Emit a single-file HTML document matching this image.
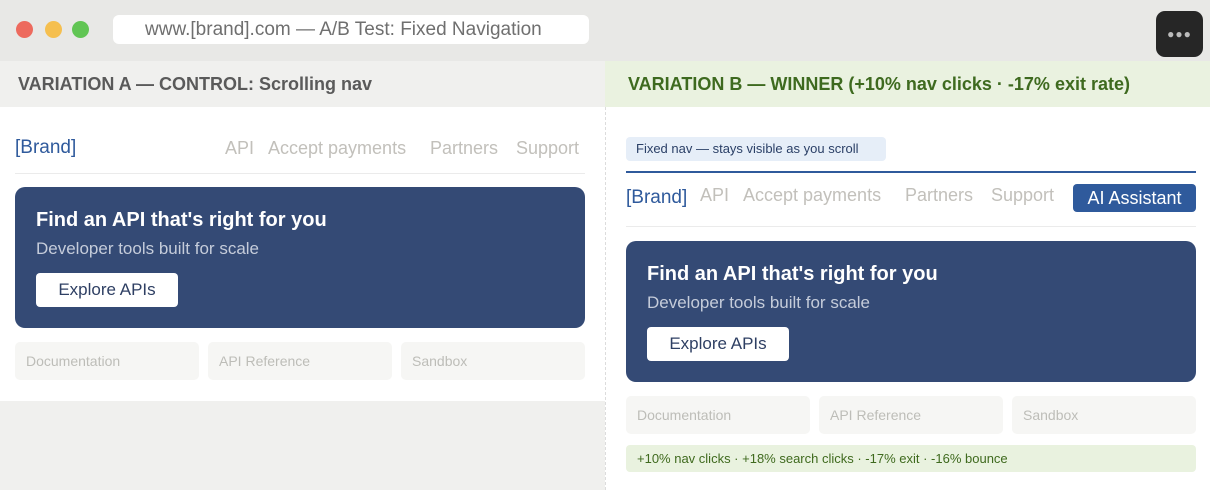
<!DOCTYPE html><html><head><style>
*{margin:0;padding:0;box-sizing:border-box}
body{width:1210px;height:490px;overflow:hidden;font-family:"Liberation Sans",sans-serif;background:#fff;position:relative}
.a{position:absolute}
.top{left:0;top:0;width:1210px;height:61px;background:#e8e8e6}
.dot{width:17px;height:17px;border-radius:50%;top:21px}
.url{left:113px;top:15px;width:476px;height:29px;background:#fff;border-radius:6px;color:#6f6f6f;font-size:19px;line-height:29px;padding-left:32px}
.menu{left:1156px;top:11px;width:47px;height:46px;background:#262626;border-radius:9px;color:#bbb;font-size:12px;text-align:center;line-height:46px;letter-spacing:1px}
.hA{left:0;top:61px;width:605px;height:46px;background:#f0f0ee;color:#5a5a5a;font-size:18px;font-weight:bold;line-height:46px;padding-left:18px}
.hB{left:605px;top:61px;width:605px;height:46px;background:#eaf2e0;color:#3e6a1f;font-size:18px;font-weight:bold;line-height:46px;padding-left:23px}
.brand{color:#2f5a9c;font-size:19px}
.nav{color:#c2c0bb;font-size:18px}
.hr{height:1px;background:#ebebeb}
.hero{background:#344a75;border-radius:10px;width:570px;height:141px;color:#fff}
.hero .t{position:absolute;left:21px;top:22px;font-size:20px;font-weight:bold}
.hero .s{position:absolute;left:21px;top:52px;font-size:17px;color:#c5ccda}
.hero .b{position:absolute;left:21px;top:86px;width:142px;height:34px;background:#fff;border-radius:4px;color:#2e3f63;font-size:17px;line-height:34px;text-align:center}
.card{width:184px;height:38px;background:#f6f6f4;border-radius:5px;color:#bdbdb8;font-size:14px;line-height:38px;padding-left:11px}
</style></head><body>
<div class="a top"></div>
<div class="a dot" style="left:16px;background:#ed6a5e"></div>
<div class="a dot" style="left:45px;background:#f5bf4f"></div>
<div class="a dot" style="left:72px;background:#61c554"></div>
<div class="a url">www.[brand].com — A/B Test: Fixed Navigation</div>
<div class="a menu">●●●</div>
<div class="a hA">VARIATION A — CONTROL: Scrolling nav</div>
<div class="a hB">VARIATION B — WINNER (+10% nav clicks · -17% exit rate)</div>
<div class="a" style="left:0;top:401px;width:605px;height:89px;background:#f0f0ee"></div>
<div class="a" style="left:605px;top:107px;height:383px;border-left:1px dashed #dcdcdc"></div>

<div class="a brand" style="left:15px;top:137px">[Brand]</div>
<div class="a nav" style="left:225px;top:138px">API</div>
<div class="a nav" style="left:268px;top:138px">Accept payments</div>
<div class="a nav" style="left:430px;top:138px">Partners</div>
<div class="a nav" style="left:516px;top:138px">Support</div>
<div class="a hr" style="left:15px;top:173px;width:570px"></div>
<div class="a hero" style="left:15px;top:187px"><div class="t">Find an API that's right for you</div><div class="s">Developer tools built for scale</div><div class="b">Explore APIs</div></div>
<div class="a card" style="left:15px;top:342px">Documentation</div>
<div class="a card" style="left:208px;top:342px">API Reference</div>
<div class="a card" style="left:401px;top:342px">Sandbox</div>

<div class="a" style="left:626px;top:137px;width:260px;height:24px;background:#e6eef8;border-radius:4px;color:#2a3f66;font-size:13px;line-height:24px;padding-left:10px">Fixed nav — stays visible as you scroll</div>
<div class="a" style="left:626px;top:171px;width:570px;height:2px;background:#2f5a9c"></div>
<div class="a brand" style="left:626px;top:187px">[Brand]</div>
<div class="a nav" style="left:700px;top:185px">API</div>
<div class="a nav" style="left:743px;top:185px">Accept payments</div>
<div class="a nav" style="left:905px;top:185px">Partners</div>
<div class="a nav" style="left:991px;top:185px">Support</div>
<div class="a" style="left:1073px;top:184px;width:123px;height:28px;background:#2f5a9c;border-radius:4px;color:#fff;font-size:18px;line-height:28px;text-align:center">AI Assistant</div>
<div class="a hr" style="left:626px;top:226px;width:570px"></div>
<div class="a hero" style="left:626px;top:241px"><div class="t">Find an API that's right for you</div><div class="s">Developer tools built for scale</div><div class="b">Explore APIs</div></div>
<div class="a card" style="left:626px;top:396px">Documentation</div>
<div class="a card" style="left:819px;top:396px">API Reference</div>
<div class="a card" style="left:1012px;top:396px">Sandbox</div>
<div class="a" style="left:626px;top:445px;width:570px;height:27px;background:#e9f2df;border-radius:4px;color:#3f6a1e;font-size:13px;line-height:27px;padding-left:11px">+10% nav clicks · +18% search clicks · -17% exit · -16% bounce</div>
</body></html>
